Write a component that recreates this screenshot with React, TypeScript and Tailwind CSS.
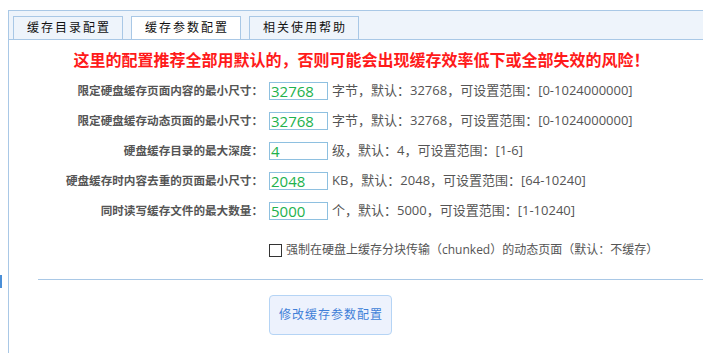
import React from "react";

type Row = { label: string; value: string; hint: string };

const rows: Row[] = [
  { label: "限定硬盘缓存页面内容的最小尺寸：", value: "32768", hint: "字节，默认：32768，可设置范围：[0-1024000000]" },
  { label: "限定硬盘缓存动态页面的最小尺寸：", value: "32768", hint: "字节，默认：32768，可设置范围：[0-1024000000]" },
  { label: "硬盘缓存目录的最大深度：", value: "4", hint: "级，默认：4，可设置范围：[1-6]" },
  { label: "硬盘缓存时内容去重的页面最小尺寸：", value: "2048", hint: "KB，默认：2048，可设置范围：[64-10240]" },
  { label: "同时读写缓存文件的最大数量：", value: "5000", hint: "个，默认：5000，可设置范围：[1-10240]" },
];

const tabs = ["缓存目录配置", "缓存参数配置", "相关使用帮助"];

const App: React.FC = () => {
  return (
    <div className="relative w-full h-[353px] overflow-hidden bg-white font-['Open_Sans','Noto_Sans_CJK_SC',sans-serif]">
      {/* stray marker on the far left */}
      <div className="absolute left-0 top-[275px] h-[13px] w-[2px] bg-[#4a8fd8]" />

      <div className="ml-[8px] mt-[10px] w-[697px] h-[343px] border-l border-t border-[#a9c8e6]">
        {/* tab strip */}
        <div className="flex h-[29px] items-end gap-[8px] border-b border-[#a9c8e6] bg-[#eef4fb] pl-[4px]">
          {tabs.map((t, i) => (
            <div
              key={t}
              className={`flex h-[23px] w-[110px] items-center justify-center border border-b-0 border-[#a9c8e6] pl-[2px] text-[12px] tracking-[2px] text-[#111] ${
                i === 1 ? "bg-white" : "bg-[#eef4fb]"
              }`}
            >
              {t}
            </div>
          ))}
        </div>

        <p className="mt-[9px] pl-[9px] text-center text-[16px] leading-[22px] font-bold text-[#ff1a1a]">
          这里的配置推荐全部用默认的，否则可能会出现缓存效率低下或全部失效的风险！
        </p>

        <div className="mt-[5px]">
          {rows.map((r) => (
            <div key={r.label} className="flex h-[30px] items-center">
              <span className="w-[254px] text-right text-[11.6px] font-bold text-[#555]">{r.label}</span>
              <div className="ml-[6px] flex h-[18px] w-[59px] items-center border border-[#8ec0e0] pl-[1px] text-[15px] text-[#22b14c]">
                {r.value}
              </div>
              <span className="ml-[4px] text-[13px] text-[#555]">{r.hint}</span>
            </div>
          ))}
        </div>

        <div className="mt-[15px] flex items-center pl-[260px]">
          <span className="h-[13px] w-[13px] border border-[#333] bg-white" />
          <span className="ml-[4px] text-[12px] text-[#555]">
            强制在硬盘上缓存分块传输（chunked）的动态页面（默认：不缓存）
          </span>
        </div>

        <div className="ml-[29px] mt-[20px] h-px bg-[#a9c8e6]" />

        <div className="mt-[15px] pl-[260px]">
          <button className="flex h-[40px] w-[123px] items-center justify-center rounded-[4px] border border-[#b5d4f5] bg-[#edf2fd] pl-[1px] text-[12px] tracking-[1px] text-[#3f7fd8]">
            修改缓存参数配置
          </button>
        </div>
      </div>
    </div>
  );
};

export default App;
